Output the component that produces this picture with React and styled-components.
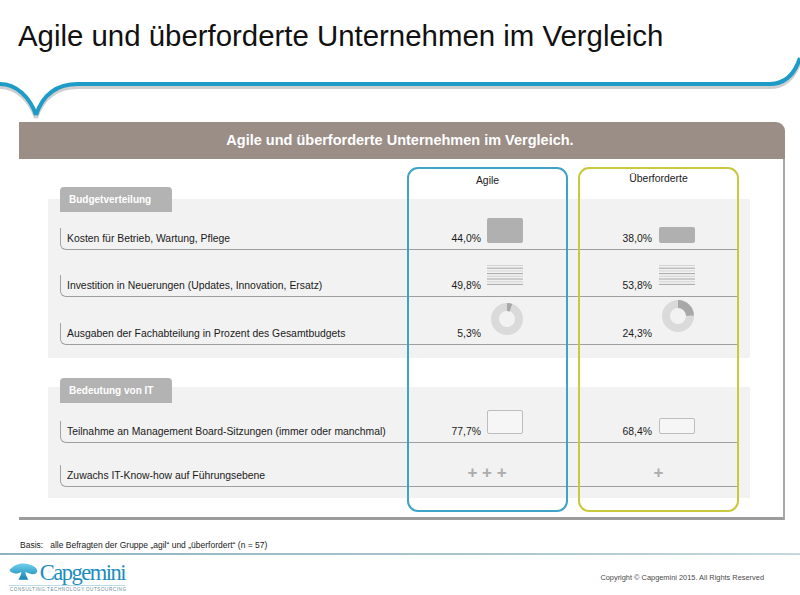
import React from 'react';
import styled, { createGlobalStyle } from 'styled-components';

const Global = createGlobalStyle`
  html, body { margin: 0; padding: 0; background: #fff; }
  body { font-family: "Liberation Sans", Arial, sans-serif; color: #1a1a1a; }
`;

const Page = styled.div`
  width: 800px;
  height: 595px;
  overflow: hidden;
  display: flex;
  flex-direction: column;
  background: #fff;
`;

const Title = styled.h1`
  margin: 0;
  padding: 19px 0 0 18px;
  height: 35px;
  font-weight: normal;
  font-size: 29.4px;
  line-height: 34px;
  color: #111;
  white-space: nowrap;
`;

const Swoosh = styled.svg`
  display: block;
  width: 800px;
  height: 68px;
  flex: none;
`;

const Panel = styled.section`
  margin-left: 19px;
  width: 766px;
  height: 398px;
  display: flex;
  flex-direction: column;
  flex: none;
`;

const PanelHeader = styled.div`
  height: 37px;
  background: #9b8e87;
  border-top-right-radius: 9px;
  color: #fff;
  font-weight: bold;
  font-size: 14.5px;
  line-height: 37px;
  text-align: center;
  padding-right: 4px;
`;

const PanelBody = styled.div`
  position: relative;
  flex: 1;
  border-right: 2px solid #a9a9a9;
  border-bottom: 3px solid #9c9c9c;
  padding-top: 28px;
  box-sizing: border-box;
`;

const Section = styled.div`
  margin: ${p => p.$mt}px 0 0 29px;
  width: 702px;
  box-sizing: border-box;
  padding: 0 0 ${p => p.$pb}px 12px;
  background: linear-gradient(to bottom, transparent ${p => p.$band}px, #f2f2f2 ${p => p.$band}px);
`;

const Tab = styled.div`
  width: 112px;
  height: 25px;
  box-sizing: border-box;
  padding-left: 9px;
  background: #b3b3b3;
  border-radius: 4px 4px 0 0;
  color: #fff;
  font-weight: bold;
  font-size: 10px;
  line-height: 25px;
`;

const Row = styled.div`
  position: relative;
  height: ${p => p.$h}px;
  width: 678px;
  display: grid;
  grid-template-columns: 337px 160px 159px;
  column-gap: 11px;
  align-items: end;
  box-sizing: border-box;
  padding-bottom: 1px;
  &::after {
    content: "";
    position: absolute;
    left: 0;
    right: 0;
    bottom: 0;
    height: 21px;
    border-left: 1px solid #a3a3a3;
    border-bottom: 1px solid #9f9f9f;
    border-bottom-left-radius: 6px;
    pointer-events: none;
  }
`;

const Label = styled.div`
  padding-left: 7px;
  font-size: 10.4px;
  line-height: 21px;
  color: #1a1a1a;
  white-space: nowrap;
`;

const Cell = styled.div`
  display: flex;
  align-items: flex-end;
  justify-content: ${p => (p.$center ? 'center' : 'flex-start')};
  height: 21px;
  overflow: visible;
  position: relative;
  z-index: 1;
`;

const Value = styled.span`
  width: ${p => p.$w}px;
  flex: none;
  text-align: right;
  font-size: 10.4px;
  line-height: 21px;
  color: #1a1a1a;
`;

const IconSlot = styled.span`
  flex: none;
  display: block;
  margin-left: ${p => p.$ml}px;
  margin-bottom: ${p => p.$mb}px;
`;

const Bar = styled.div`
  width: 36px;
  height: ${p => p.$h}px;
  border-radius: 2px;
  background: ${p => (p.$outline ? '#f6f6f6' : '#b0b0b0')};
  border: ${p => (p.$outline ? '1px solid #bdbdbd' : 'none')};
  box-sizing: border-box;
`;

const Plus = styled.span`
  font-size: 17px;
  font-weight: bold;
  color: #acacac;
  line-height: 21px;
  margin-bottom: 3px;
  margin-left: ${p => p.$ml || 0}px;
  white-space: pre;
`;

const GroupBox = styled.div`
  position: absolute;
  top: 8px;
  left: ${p => p.$left}px;
  width: ${p => p.$w}px;
  height: 345px;
  box-sizing: border-box;
  border: 2px solid ${p => p.$color};
  border-radius: 11px;
  text-align: center;
  font-size: 10.4px;
  line-height: 14px;
  padding-top: ${p => p.$pt}px;
  color: #1a1a1a;
  z-index: 2;
  pointer-events: none;
`;

const Basis = styled.div`
  height: 33px;
  box-sizing: border-box;
  padding: 20px 0 0 20px;
  font-size: 8.5px;
  line-height: 10px;
  color: #1a1a1a;
  white-space: pre;
  flex: none;
`;

const Separator = styled.div`
  height: 2px;
  flex: none;
  background: linear-gradient(to right, #8fb3be, #a9c6ce 60%, #c6d8dd);
`;

const Footer = styled.footer`
  flex: 1;
  display: flex;
  justify-content: space-between;
  align-items: flex-start;
  padding: 7px 36px 0 9px;
`;

const Logo = styled.div`
  display: flex;
  flex-direction: column;
  width: 116px;
`;

const LogoTop = styled.div`
  display: flex;
  align-items: flex-start;
  height: 21px;
`;

const LogoWord = styled.span`
  font-family: "Liberation Serif", "Times New Roman", serif;
  font-size: 22.5px;
  line-height: 21px;
  color: #1b8dbd;
  letter-spacing: -1.5px;
  margin-left: 2px;
`;

const Tagline = styled.div`
  margin-top: 2px;
  padding-left: 1px;
  border-top: 1px solid #b9dce8;
  font-size: 4.6px;
  line-height: 7px;
  letter-spacing: 0.55px;
  color: #6d8c99;
  white-space: nowrap;
`;

const Copyright = styled.div`
  margin-top: 11px;
  font-size: 7.4px;
  color: #4a4a4a;
  white-space: nowrap;
`;

const Stripes = () => (
  <svg width="36" height="20" viewBox="0 0 36 20">
    {[0, 1, 2, 3, 4, 5, 6, 7].map(i => (
      <line key={i} x1="0" x2="36" y1={0.5 + i * 2.7} y2={0.5 + i * 2.7}
        stroke={i % 2 ? '#9d9d9d' : '#cfcfcf'} strokeWidth="0.9" />
    ))}
  </svg>
);

const Donut = ({ pct }) => {
  const r = 12;
  const c = 2 * Math.PI * r;
  return (
    <svg width="32" height="32" viewBox="0 0 32 32">
      <circle cx="16" cy="16" r={r} fill="none" stroke="#dadada" strokeWidth="8" />
      <circle cx="16" cy="16" r={r} fill="none" stroke="#a8a8a8" strokeWidth="8"
        strokeDasharray={`${(c * pct) / 100} ${c}`} transform="rotate(-90 16 16)" />
    </svg>
  );
};

const Spade = () => (
  <svg width="31" height="19" viewBox="0 0 31 19">
    <defs>
      <linearGradient id="sp" x1="0" y1="0" x2="0" y2="1">
        <stop offset="0" stopColor="#6fd0ec" />
        <stop offset="1" stopColor="#1583b3" />
      </linearGradient>
    </defs>
    <path d="M0.5 8 C4 3.5 10 0.5 16 0.8 C23 1.2 30.5 4.5 30.5 8.8 C30.5 12.5 26 13.2 22 11.6 C20 10.8 18.5 10.2 17.5 10.2 C18 13 19.5 16 21 18.5 L10 18.5 C11.5 16 13 13 13.5 10.2 C12 10.6 9.5 11.6 7 11.6 C3.5 11.6 1 10 0.5 8 Z" fill="url(#sp)" />
  </svg>
);

export default function App() {
  return (
    <Page>
      <Global />
      <Title>Agile und überforderte Unternehmen im Vergleich</Title>
      <Swoosh viewBox="0 0 800 68">
        <path d="M0 33 C16 33 30 46 36 64 M36 64 C42 46 55 33 78 33 L770 33 C786 33 795 22 800 7" fill="none" stroke="#cfcfcf" strokeWidth="4" />
        <path d="M0 30 C16 30 30 43 36 61 M36 61 C42 43 55 30 78 30 L770 30 C786 30 795 19 800 4" fill="none" stroke="#1f9bc7" strokeWidth="4" strokeLinejoin="miter" />
      </Swoosh>
      <Panel>
        <PanelHeader>Agile und überforderte Unternehmen im Vergleich.</PanelHeader>
        <PanelBody>
          <Section $mt={0} $pb={13} $band={12}>
            <Tab>Budgetverteilung</Tab>
            <Row $h={38}>
              <Label>Kosten für Betrieb, Wartung, Pflege</Label>
              <Cell>
                <Value $w={73}>44,0%</Value>
                <IconSlot $ml={6} $mb={6}><Bar $h={25} /></IconSlot>
              </Cell>
              <Cell>
                <Value $w={73}>38,0%</Value>
                <IconSlot $ml={7} $mb={6}><Bar $h={16} /></IconSlot>
              </Cell>
            </Row>
            <Row $h={47}>
              <Label>Investition in Neuerungen (Updates, Innovation, Ersatz)</Label>
              <Cell>
                <Value $w={73}>49,8%</Value>
                <IconSlot $ml={6} $mb={7}><Stripes /></IconSlot>
              </Cell>
              <Cell>
                <Value $w={73}>53,8%</Value>
                <IconSlot $ml={7} $mb={7}><Stripes /></IconSlot>
              </Cell>
            </Row>
            <Row $h={48}>
              <Label>Ausgaben der Fachabteilung in Prozent des Gesamtbudgets</Label>
              <Cell>
                <Value $w={73}>5,3%</Value>
                <IconSlot $ml={10} $mb={5}><Donut pct={5.3} /></IconSlot>
              </Cell>
              <Cell>
                <Value $w={73}>24,3%</Value>
                <IconSlot $ml={10} $mb={8}><Donut pct={24.3} /></IconSlot>
              </Cell>
            </Row>
          </Section>
          <Section $mt={20} $pb={11} $band={9}>
            <Tab>Bedeutung von IT</Tab>
            <Row $h={40}>
              <Label>Teilnahme an Management Board-Sitzungen (immer oder manchmal)</Label>
              <Cell>
                <Value $w={73}>77,7%</Value>
                <IconSlot $ml={6} $mb={8}><Bar $outline $h={24} /></IconSlot>
              </Cell>
              <Cell>
                <Value $w={73}>68,4%</Value>
                <IconSlot $ml={7} $mb={8}><Bar $outline $h={16} /></IconSlot>
              </Cell>
            </Row>
            <Row $h={44}>
              <Label>Zuwachs IT-Know-how auf Führungsebene</Label>
              <Cell $center>
                <Plus $ml={-2}>+ + +</Plus>
              </Cell>
              <Cell $center>
                <Plus>+</Plus>
              </Cell>
            </Row>
          </Section>
          <GroupBox $left={388} $w={161} $color="#3fa3c8" $pt={5}>Agile</GroupBox>
          <GroupBox $left={559} $w={161} $color="#c9c93d" $pt={3}>Überforderte</GroupBox>
        </PanelBody>
      </Panel>
      <Basis>{'Basis:   alle Befragten der Gruppe „agil“ und „überfordert“ (n = 57)'}</Basis>
      <Separator />
      <Footer>
        <Logo>
          <LogoTop>
            <Spade />
            <LogoWord>Capgemini</LogoWord>
          </LogoTop>
          <Tagline>CONSULTING.TECHNOLOGY.OUTSOURCING</Tagline>
        </Logo>
        <Copyright>Copyright © Capgemini 2015. All Rights Reserved</Copyright>
      </Footer>
    </Page>
  );
}
